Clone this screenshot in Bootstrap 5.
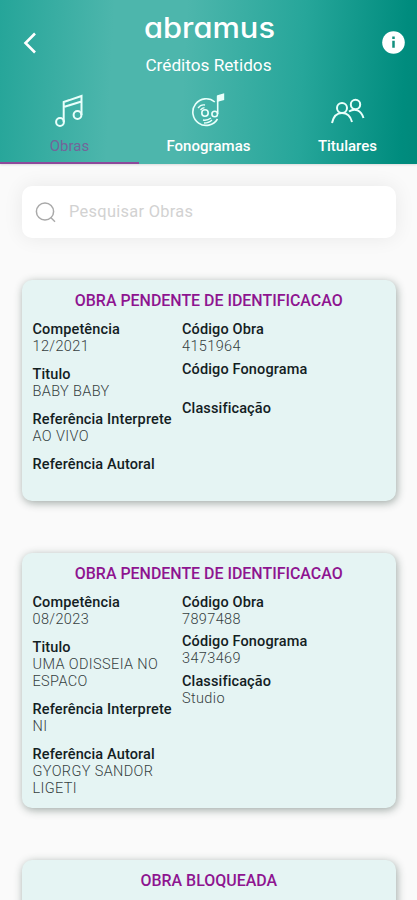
<!DOCTYPE html>
<html lang="pt-BR">
<head>
<meta charset="utf-8">
<meta name="viewport" content="width=device-width, initial-scale=1">
<title>Créditos Retidos</title>
<link href="https://cdn.jsdelivr.net/npm/bootstrap@5.3.0/dist/css/bootstrap.min.css" rel="stylesheet">
<style>
body{font-family:Roboto,"Liberation Sans",sans-serif;background:#fafafa;height:900px;overflow:hidden}
.app-head{height:164px;background:linear-gradient(93deg,#25a599 0%,#4db6ac 27%,#4db6ac 44%,#26a69a 72%,#008c7e 96%,#00897b 100%);box-shadow:0 1px 2px rgba(0,0,0,.12)}
.head-bar{height:85px;padding:0 12px 0 22px}
.head-title{font-size:17.2px;line-height:22px}
.head-brand{padding-top:6px;margin-right:3px}
.brand-logo{margin-bottom:7px;font-family:Inter,sans-serif;font-feature-settings:"cv11"}
.tab-item{height:79px;padding-top:6px;font-size:15px;line-height:20px;font-weight:500;border-bottom:2px solid transparent}
.tab-item svg{margin-bottom:9px}
.tab-item.current{border-color:#8d4a9b}
.tab-item.current span{color:#74659a;font-weight:400}
.search-box{height:52px;margin:22px 21px 42px 22px;border-radius:10px;padding-left:12px;box-shadow:0 0 20px rgba(0,0,0,.075)}
.search-box input{font-size:16.4px;letter-spacing:.3px;color:#888;margin-left:11px}
.search-box input::placeholder{color:#d2d2d2;opacity:1}
.work-card{margin:0 21px 52px 22px;padding:11px 11px 0 10.5px;border:0;border-radius:10px;background:#e5f4f3;box-shadow:1px 2px 9px rgba(30,55,45,.42)}
.work-card h2{font-size:15.95px;line-height:20px;font-weight:500;color:#8e1490;margin:0 0 10px}
.work-fields{margin-bottom:-.4px}
.left-col{width:149.5px}
dl{margin:0;font-size:14.5px;line-height:17px}
dt{font-weight:500;color:#13201f;white-space:nowrap;letter-spacing:.13px}
dd{font-weight:300;color:#35403f;min-height:17px;margin:0 0 11px;letter-spacing:.37px}
.left-col dd{max-width:138px}
.right-col dd{margin-bottom:5.7px}
</style>
<script src="https://cdn.jsdelivr.net/npm/bootstrap@5.3.0/dist/js/bootstrap.bundle.min.js"></script>
</head>
<body>
<header class="app-head text-white">
  <div class="head-bar d-flex align-items-center justify-content-between">
    <svg width="16" height="22" viewBox="0 0 16 22" fill="none" stroke="#fff" stroke-width="2.6"><path d="M13 1.5 3.500 11l9.500 9.500"/></svg>
    <div class="text-center head-brand">
      <svg class="brand-logo d-block mx-auto overflow-visible" width="140" height="31" viewBox="0 0 140 31"><text x="5" y="21.800" textLength="131" lengthAdjust="spacingAndGlyphs" font-size="28" font-weight="500" fill="#fff">abramus</text></svg>
      <div class="head-title">Créditos Retidos</div>
    </div>
    <svg width="23" height="23" viewBox="0 0 23 23"><circle cx="11.500" cy="11.500" r="11.300" fill="#fff"/><path d="M11.500 5.500v2.600M11.500 9.800v7" stroke="#13907f" stroke-width="2.500"/></svg>
  </div>
  <nav class="row g-0 text-center">
    <div class="col-4 tab-item current d-flex flex-column align-items-center">
      <svg width="36" height="36" viewBox="0 0 36 36" fill="none" stroke="#e9fffb" stroke-width="2"><circle cx="9" cy="31" r="3.900"/><circle cx="26.500" cy="24" r="3.900"/><path d="M12.700 31V11L30.500 5v19M12.700 16 30.500 10.500"/></svg>
      <span>Obras</span>
    </div>
    <div class="col-4 tab-item d-flex flex-column align-items-center">
      <svg width="36" height="36" viewBox="0 0 36 36" fill="none" stroke="#e9fffb" stroke-width="1.600"><path d="M24.800 11A13.300 13.300 0 1 0 27.500 28"/><circle cx="15" cy="22" r="3.200"/><path d="M8 17q3-4 7-3M10.500 19q1.500-2 4-2.300M13 29q4 1 8-2M14 32q5 0 8-3" stroke-width="1.300"/><circle cx="24.700" cy="23" r="2.800"/><path d="M27.700 23V5"/><path d="m27.700 5 5.700-1.700v5L27.700 10z" fill="#e9fffb"/></svg>
      <span>Fonogramas</span>
    </div>
    <div class="col-4 tab-item d-flex flex-column align-items-center">
      <svg width="36" height="36" viewBox="0 0 36 36" fill="none" stroke="#e9fffb" stroke-width="2"><circle cx="13" cy="17" r="5"/><circle cx="26.500" cy="13.500" r="4.700"/><path d="M3 32c1.500-7 5.500-10 10-10s8.500 3 10 9M20 20.500c6-4 12-1 14.500 6.500"/></svg>
      <span>Titulares</span>
    </div>
  </nav>
</header>
<main>
  <div class="search-box bg-white d-flex align-items-center">
    <svg width="24" height="24" viewBox="0 0 24 24" fill="none" stroke="#a9a9a9" stroke-width="1.500"><circle cx="11" cy="11.500" r="8.600"/><path d="m17 17.700 4 4"/></svg>
    <input class="border-0 bg-transparent p-0" type="text" placeholder="Pesquisar Obras" aria-label="Pesquisar Obras">
  </div>
  <article class="card work-card">
    <h2 class="text-center">OBRA PENDENTE DE IDENTIFICACAO</h2>
    <div class="d-flex work-fields">
      <dl class="left-col">
        <dt>Competência</dt><dd>12/2021</dd>
        <dt>Titulo</dt><dd>BABY BABY</dd>
        <dt>Referência Interprete</dt><dd>AO VIVO</dd>
        <dt>Referência Autoral</dt><dd></dd>
      </dl>
      <dl class="right-col">
        <dt>Código Obra</dt><dd>4151964</dd>
        <dt>Código Fonograma</dt><dd></dd>
        <dt>Classificação</dt><dd></dd>
      </dl>
    </div>
  </article>
  <article class="card work-card">
    <h2 class="text-center">OBRA PENDENTE DE IDENTIFICACAO</h2>
    <div class="d-flex">
      <dl class="left-col">
        <dt>Competência</dt><dd>08/2023</dd>
        <dt>Titulo</dt><dd>UMA ODISSEIA NO ESPACO</dd>
        <dt>Referência Interprete</dt><dd>NI</dd>
        <dt>Referência Autoral</dt><dd>GYORGY SANDOR LIGETI</dd>
      </dl>
      <dl class="right-col">
        <dt>Código Obra</dt><dd>7897488</dd>
        <dt>Código Fonograma</dt><dd>3473469</dd>
        <dt>Classificação</dt><dd>Studio</dd>
      </dl>
    </div>
  </article>
  <article class="card work-card pb-5">
    <h2 class="text-center">OBRA BLOQUEADA</h2>
  </article>
</main>
</body>
</html>
